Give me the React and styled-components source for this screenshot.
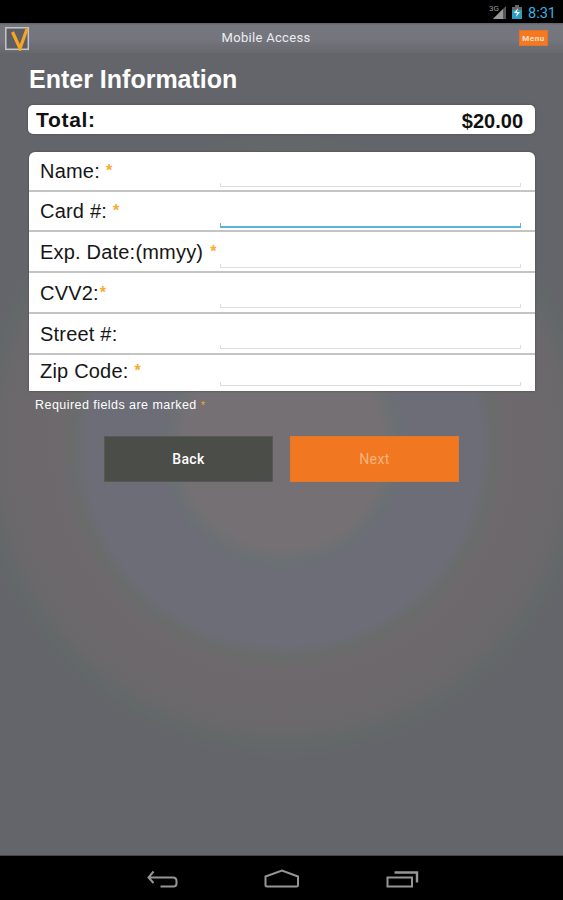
import React from "react";
import styled, { createGlobalStyle } from "styled-components";

const GlobalStyle = createGlobalStyle`
  * {
    box-sizing: border-box;
  }
  body {
    margin: 0;
    background: #000;
  }
`;

const Screen = styled.div`
  display: flex;
  flex-direction: column;
  width: 563px;
  height: 900px;
  overflow: hidden;
  font-family: "Liberation Sans", Arial, sans-serif;
`;

const StatusBar = styled.div`
  display: flex;
  justify-content: flex-end;
  height: 23px;
  background: #000;
`;

const Body = styled.div`
  display: flex;
  flex-direction: column;
  height: 833px;
  border-bottom: 1px solid #45464a;
  background: radial-gradient(
    circle at 283px 424px,
    #747073 0,
    #747073 102px,
    #6b7074 115px,
    #6c6d77 126px,
    #6c6d77 198px,
    #696c6b 210px,
    #6d696c 222px,
    #6b686b 280px,
    #636869 298px,
    #64656a 312px
  );
`;

const Header = styled.header`
  display: grid;
  grid-template-columns: 60px 1fr 60px;
  align-items: center;
  height: 30px;
  padding: 0 5px;
  background: linear-gradient(#5f6065 0, #75767e 2px, #74757d 17px, #67686d 30px);
`;

const HeaderTitle = styled.div`
  padding-right: 31px;
  padding-bottom: 1px;
  text-align: center;
  font-family: Roboto, sans-serif;
  font-size: 13px;
  letter-spacing: 0.3px;
  color: #ededf0;
`;

const MenuButton = styled.button`
  justify-self: end;
  width: 29px;
  height: 16px;
  margin: 0 10px 1px 0;
  padding: 0;
  border: 1px solid #d9762f;
  background: #f47920;
  font-family: Roboto, sans-serif;
  font-size: 8px;
  font-weight: 700;
  line-height: 15px;
  letter-spacing: 0.5px;
  color: #fbe0cc;
`;

const Form = styled.main`
  display: flex;
  flex-direction: column;
  padding: 11px 28px 0;
`;

const Title = styled.h1`
  height: 30px;
  margin: 0 0 11px 1px;
  font-size: 25px;
  line-height: 30px;
  white-space: nowrap;
  color: #fff;
`;

const TotalBox = styled.div`
  display: flex;
  justify-content: space-between;
  height: 29px;
  margin-bottom: 18px;
  padding: 1px 12px 0 8px;
  border-radius: 5px;
  background: #fff;
  box-shadow: 0 0 2px #3f4044;
  font-size: 20px;
  font-weight: 700;
  line-height: 30px;
  color: #111;
`;

const TotalLabel = styled.span`
  font-size: 21px;
  line-height: 28px;
  letter-spacing: 0.7px;
`;

const Fields = styled.div`
  display: flex;
  flex-direction: column;
  margin-left: 1px;
  border-radius: 6px 6px 0 0;
  background: #fff;
  box-shadow: 0 0 2px #3f4044;
`;

const Row = styled.label`
  display: flex;
  align-items: flex-start;
  justify-content: space-between;
  height: ${(props) => props.$height}px;
  padding: 0 14px 0 11px;
  border-bottom: ${(props) => (props.$last ? "none" : "2px solid #c4c4c4")};
`;

const Label = styled.span`
  padding-top: ${(props) => props.$top}px;
  font-size: 20px;
  line-height: 24px;
  letter-spacing: 0.2px;
  white-space: nowrap;
  color: #161616;
`;

const Star = styled.span`
  position: relative;
  top: -2px;
  margin-left: ${(props) => props.$gap}px;
  font-size: 16px;
  font-weight: 700;
  line-height: 1;
  letter-spacing: 0;
  color: #f9ab35;
`;

const Input = styled.input`
  flex: none;
  align-self: flex-end;
  width: 301px;
  height: ${(props) => (props.$active ? 5 : 4)}px;
  margin-bottom: ${(props) => props.$bottom}px;
  padding: 0;
  border: solid ${(props) => (props.$active ? "#5bb2de" : "#dedede")};
  border-width: 0 1px ${(props) => (props.$active ? 2 : 1)}px;
  outline: none;
  background: transparent;
`;

const Note = styled.div`
  height: 29px;
  padding-left: 7px;
  font-size: 12.5px;
  line-height: 29px;
  letter-spacing: 0.45px;
  color: #fff;
`;

const NoteStar = styled.span`
  font-size: 11px;
  color: #f9a51f;
`;

const Actions = styled.div`
  display: flex;
  justify-content: center;
  gap: 17px;
  margin-top: 16px;
`;

const Button = styled.button`
  width: 169px;
  height: 46px;
  padding: 0;
  border: 1px solid ${(props) => (props.$primary ? "#e0792f" : "#565853")};
  background: ${(props) => (props.$primary ? "#f17820" : "#4b4d49")};
  font-family: Roboto, sans-serif;
  font-size: 14px;
  font-weight: ${(props) => (props.$primary ? 400 : 500)};
  letter-spacing: 0.4px;
  color: ${(props) => (props.$primary ? "#f8b27c" : "#fff")};
`;

const NavBar = styled.nav`
  display: flex;
  justify-content: center;
  height: 44px;
  background: #000;
`;

const fields = [
  { label: "Name:", gap: 6, height: 40, top: 7, bottom: 3 },
  { label: "Card #:", gap: 6, height: 40, top: 7, bottom: 2, active: true },
  { label: "Exp. Date:(mmyy)", gap: 7, height: 41, top: 8, bottom: 3 },
  { label: "CVV2:", gap: 1, height: 41, top: 8, bottom: 4 },
  { label: "Street #:", height: 41, top: 8, bottom: 4 },
  { label: "Zip Code:", gap: 6, height: 36, top: 4, bottom: 5, last: true },
];

function Logo() {
  return (
    <svg width="25" height="25" viewBox="0 0 25 25" fill="none">
      <rect x="0.8" y="1.8" width="22.5" height="21.5" fill="#5d5e65" stroke="#c5c5ca" strokeWidth="1.5" />
      <path d="M7.5 6L15 22.5L22 3" stroke="#f9a51f" strokeWidth="3.2" />
    </svg>
  );
}

function StatusIcons() {
  return (
    <svg width="76" height="23" viewBox="487 0 76 23">
      <text x="489" y="11" fontFamily="Roboto" fontSize="8" fill="#999">3G</text>
      <path d="M493 19L506 6V19Z" fill="#555" />
      <path d="M493 19L503 9V19Z" fill="#999" />
      <path d="M512 7h3V5h4v2h3v12h-10Z" fill="#2f9fc0" />
      <path d="M512 7h3V5h4v2h3v3h-10Z" fill="#666" />
      <path d="M518 8l-4 5h3l-1 4 4-5h-3Z" fill="#fff" />
      <text x="528" y="18" fontFamily="Roboto" fontSize="14.5" fill="#33b5e5">8:31</text>
    </svg>
  );
}

function NavIcons() {
  return (
    <svg width="563" height="44" viewBox="0 856 563 44" fill="none" stroke="#959595" strokeWidth="2">
      <path d="M149 877.5H173Q176.5 877.5 176.5 881V883.5Q176.5 886.5 173.5 886.5H160.5M153.5 871.5L148.5 877.5L153.5 883" />
      <path d="M267 886.5H296.5Q298 886.5 298 885V876.5L282 870.5L265.5 876.5V885Q265.5 886.5 267 886.5Z" />
      <path d="M387.5 877.5H412V886.5H387.5Z" />
      <path d="M394.5 872.5H417V882.5" strokeWidth="2.4" />
    </svg>
  );
}

export default function App() {
  return (
    <Screen>
      <GlobalStyle />
      <StatusBar>
        <StatusIcons />
      </StatusBar>
      <Body>
        <Header>
          <Logo />
          <HeaderTitle>Mobile Access</HeaderTitle>
          <MenuButton>Menu</MenuButton>
        </Header>
        <Form>
          <Title>Enter Information</Title>
          <TotalBox>
            <TotalLabel>Total:</TotalLabel>
            <span>$20.00</span>
          </TotalBox>
          <Fields>
            {fields.map((field) => (
              <Row key={field.label} $height={field.height} $last={field.last}>
                <Label $top={field.top}>
                  {field.label}
                  {field.gap && <Star $gap={field.gap}>*</Star>}
                </Label>
                <Input $bottom={field.bottom} $active={field.active} />
              </Row>
            ))}
          </Fields>
          <Note>
            Required fields are marked <NoteStar>*</NoteStar>
          </Note>
          <Actions>
            <Button>Back</Button>
            <Button $primary>Next</Button>
          </Actions>
        </Form>
      </Body>
      <NavBar>
        <NavIcons />
      </NavBar>
    </Screen>
  );
}
